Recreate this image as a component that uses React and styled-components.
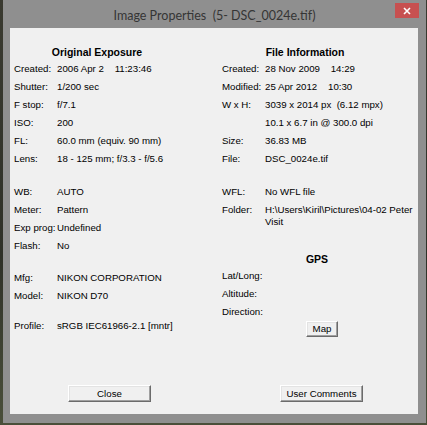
import React from "react";
import styled, { createGlobalStyle } from "styled-components";

const GlobalStyle = createGlobalStyle`
  html, body { margin: 0; padding: 0; }
  body {
    width: 427px;
    height: 425px;
    overflow: hidden;
    background: linear-gradient(180deg, #3a3a30 0%, #2f3128 60%, #4a4f3a 100%);
  }
`;

const Window = styled.div`
  margin-left: 3px;
  width: 423px;
  height: 423px;
  background: #8f8f8f;
  display: flex;
  flex-direction: column;
`;

const TitleBar = styled.div`
  height: 28px;
  display: grid;
  grid-template-columns: 1fr auto 1fr;
  align-items: start;
`;

const Title = styled.div`
  grid-column: 2;
  font-family: Lato, "Open Sans", sans-serif;
  font-size: 12.5px;
  color: #353535;
  line-height: 14px;
  padding-top: 9px;
  white-space: pre;
`;

const CloseBox = styled.div`
  grid-column: 3;
  justify-self: end;
  margin-top: 3px;
  margin-right: 7px;
  width: 24px;
  height: 15px;
  background: #c75050;
  display: flex;
  align-items: center;
  justify-content: center;
`;

const Client = styled.div`
  flex: 1;
  margin: 0 8px 9px 7px;
  background: #f0f0f0;
  padding-top: 14px;
  display: flex;
  flex-direction: column;
  font-family: "Liberation Sans", Arial, sans-serif;
  font-size: 9.7px;
  color: #000;
`;

const Columns = styled.div`
  display: grid;
  grid-template-columns: 208px 1fr;
  padding-left: 4px;
`;

const Column = styled.div`
  display: flex;
  flex-direction: column;
`;

const Heading = styled.div`
  width: ${(p) => p.$width}px;
  margin-top: ${(p) => p.$gap || 0}px;
  height: 18px;
  box-sizing: border-box;
  padding-top: 3px;
  line-height: 15px;
  text-align: center;
  font-weight: bold;
  font-size: 10.5px;
`;

const Group = styled.div`
  margin-top: ${(p) => p.$gap || 0}px;
  display: flex;
  flex-direction: column;
`;

const Row = styled.div`
  display: grid;
  grid-template-columns: 43px 1fr;
  line-height: 12px;
  padding: 3px 0;
  white-space: pre;
`;

const Label = styled.span``;
const Value = styled.span`
  white-space: ${(p) => (p.$wrap ? "normal" : "pre")};
  padding-right: 2px;
`;

const Button = styled.button`
  font-family: "Liberation Sans", Arial, sans-serif;
  font-size: 9.7px;
  color: #000;
  background: #f0f0f0;
  width: ${(p) => p.$width}px;
  height: ${(p) => p.$height}px;
  margin-left: ${(p) => p.$left || 0}px;
  padding: 0;
  border: 1px solid;
  border-color: #ffffff #6b6b6b #6b6b6b #ffffff;
  box-shadow: inset -1px -1px 0 #a0a0a0, inset 1px 1px 0 #e3e3e3;
  line-height: 1;
`;

const ButtonRow = styled.div`
  margin-top: auto;
  padding: 0 0 12px 58px;
  display: flex;
  gap: 129px;
`;

const Field = ({ label, children, wrap }) => (
  <Row>
    <Label>{label}</Label>
    <Value $wrap={wrap}>{children}</Value>
  </Row>
);

export default function App() {
  return (
    <>
      <GlobalStyle />
      <Window>
        <TitleBar>
          <Title>{"Image Properties  (5- DSC_0024e.tif)"}</Title>
          <CloseBox>
            <svg width="8" height="8" viewBox="0 0 8 8">
              <path d="M1 1L7 7M7 1L1 7" stroke="#fff" strokeWidth="1.6" />
            </svg>
          </CloseBox>
        </TitleBar>
        <Client>
          <Columns>
            <Column>
              <Heading $width={166}>Original Exposure</Heading>
              <Group>
                <Field label="Created:">{"2006 Apr 2    11:23:46"}</Field>
                <Field label="Shutter:">1/200 sec</Field>
                <Field label="F stop:">f/7.1</Field>
                <Field label="ISO:">200</Field>
                <Field label="FL:">60.0 mm (equiv. 90 mm)</Field>
                <Field label="Lens:">18 - 125 mm; f/3.3 - f/5.6</Field>
              </Group>
              <Group $gap={15}>
                <Field label="WB:">AUTO</Field>
                <Field label="Meter:">Pattern</Field>
                <Field label="Exp prog:">Undefined</Field>
                <Field label="Flash:">No</Field>
              </Group>
              <Group $gap={14}>
                <Field label="Mfg:">NIKON CORPORATION</Field>
                <Field label="Model:">NIKON D70</Field>
              </Group>
              <Group $gap={12}>
                <Field label="Profile:">sRGB IEC61966-2.1 [mntr]</Field>
              </Group>
            </Column>
            <Column>
              <Heading $width={166}>File Information</Heading>
              <Group>
                <Field label="Created:">{"28 Nov 2009    14:29"}</Field>
                <Field label="Modified:">{"25 Apr 2012    10:30"}</Field>
                <Field label="W x H:">{"3039 x 2014 px  (6.12 mpx)"}</Field>
                <Field label="">10.1 x 6.7 in @ 300.0 dpi</Field>
                <Field label="Size:">36.83 MB</Field>
                <Field label="File:">DSC_0024e.tif</Field>
              </Group>
              <Group $gap={15}>
                <Field label="WFL:">No WFL file</Field>
                <Field label="Folder:" wrap>
                  {"H:\\Users\\Kiril\\Pictures\\04-02 Peter Visit"}
                </Field>
              </Group>
              <Heading $width={190} $gap={18}>GPS</Heading>
              <Group>
                <Field label="Lat/Long:"></Field>
                <Field label="Altitude:"></Field>
                <Field label="Direction:"></Field>
              </Group>
              <Group>
                <Button $width={32} $height={16} $left={84}>Map</Button>
              </Group>
            </Column>
          </Columns>
          <ButtonRow>
            <Button $width={83} $height={17}>Close</Button>
            <Button $width={83} $height={17}>User Comments</Button>
          </ButtonRow>
        </Client>
      </Window>
    </>
  );
}
